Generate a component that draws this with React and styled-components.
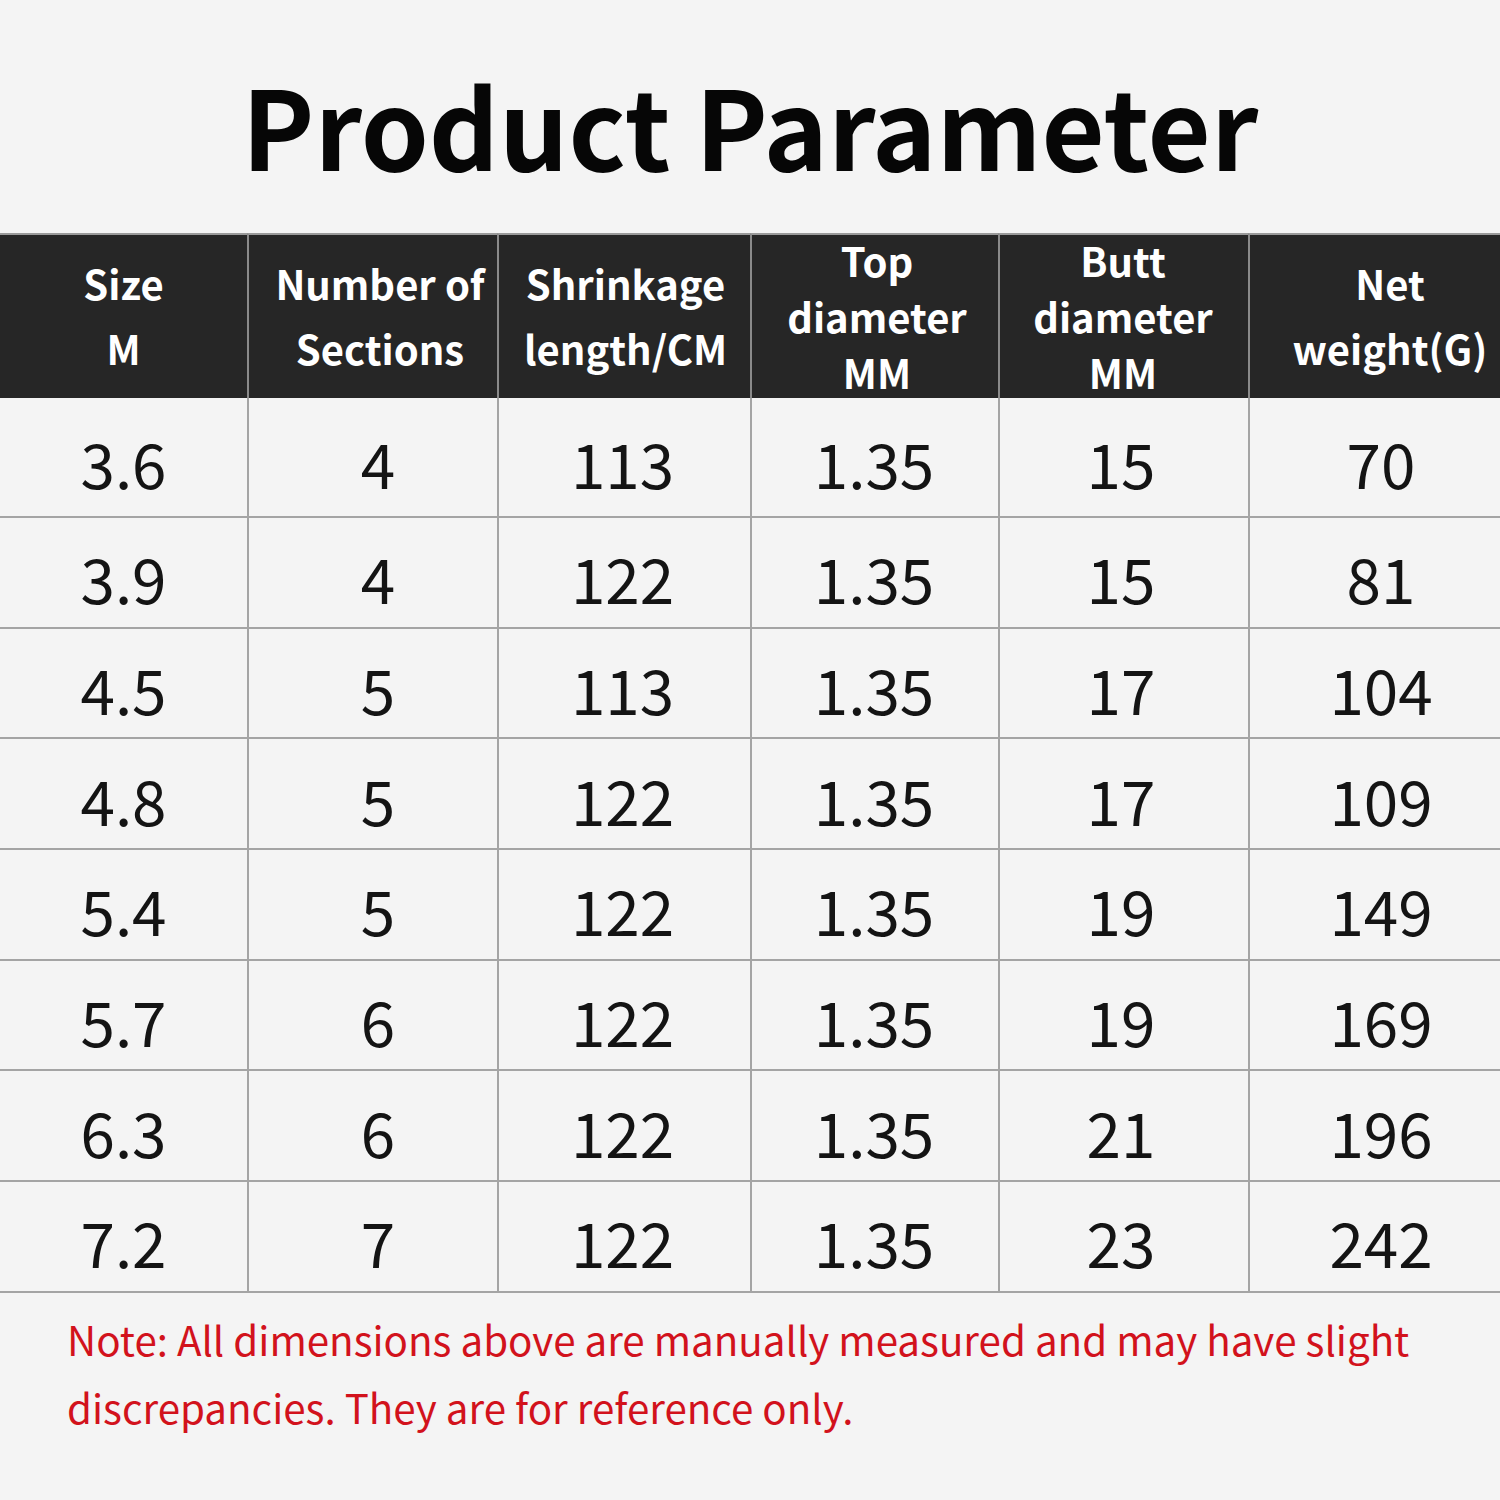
import React from "react";
import styled, { createGlobalStyle } from "styled-components";

const Global = createGlobalStyle`
  html, body { margin: 0; padding: 0; background: #f4f4f4; }
  body { font-family: "Noto Sans CJK SC", "Noto Sans", sans-serif; }
`;

const Page = styled.div`
  width: 1500px;
  height: 1500px;
  background: #f4f4f4;
  display: flex;
  flex-direction: column;
  overflow: hidden;
`;

const Title = styled.h1`
  margin: 0;
  height: 233px;
  display: flex;
  align-items: center;
  justify-content: center;
  font-size: 109px;
  font-weight: 700;
  color: #060606;
  padding-top: 14px;
  box-sizing: border-box;
`;

const Table = styled.div`
  display: grid;
  grid-template-columns: 247px 250px 253px 248px 250px 1fr;
  grid-template-rows: 165px 120px repeat(7, 110.7px);
`;

const shiftPad = (s) =>
  s >= 0 ? `padding-left: ${s * 2}px;` : `padding-right: ${-s * 2}px;`;

const HeadCell = styled.div`
  background: #262626;
  color: #fff;
  font-weight: 700;
  font-size: 40px;
  line-height: ${(p) => (p.$lines === 3 ? "56px" : "65px")};
  display: flex;
  align-items: center;
  justify-content: center;
  text-align: center;
  white-space: pre-line;
  border-top: 2px solid #9a9a9a;
  border-left: ${(p) => (p.$first ? "none" : "2px solid #8a8a8a")};
  box-sizing: border-box;
  padding-bottom: 2px;
  ${(p) => shiftPad(p.$shift || 0)}
`;

const Cell = styled.div`
  display: flex;
  align-items: center;
  justify-content: center;
  font-size: 62px;
  font-weight: 400;
  color: #141414;
  border-left: ${(p) => (p.$first ? "none" : "2px solid #a4a4a4")};
  border-bottom: 2px solid #a4a4a4;
  box-sizing: border-box;
  padding-top: 10px;
  ${(p) => shiftPad(p.$shift || 0)}
`;

const Note = styled.p`
  margin: 0;
  padding: 12px 60px 0 67px;
  color: #d2121c;
  font-size: 40.3px;
  line-height: 68px;
  font-weight: 400;
`;

const headers = [
  { t: "Size\nM", l: 2, s: 0 },
  { t: "Number of\nSections", l: 2, s: 7 },
  { t: "Shrinkage\nlength/CM", l: 2, s: 1 },
  { t: "Top\ndiameter\nMM", l: 3, s: 2 },
  { t: "Butt\ndiameter\nMM", l: 3, s: -1 },
  { t: "Net\nweight(G)", l: 2, s: 15 },
];

const cellShift = [0, 5, -2, -1, -3, 6];

const rows = [
  ["3.6", "4", "113", "1.35", "15", "70"],
  ["3.9", "4", "122", "1.35", "15", "81"],
  ["4.5", "5", "113", "1.35", "17", "104"],
  ["4.8", "5", "122", "1.35", "17", "109"],
  ["5.4", "5", "122", "1.35", "19", "149"],
  ["5.7", "6", "122", "1.35", "19", "169"],
  ["6.3", "6", "122", "1.35", "21", "196"],
  ["7.2", "7", "122", "1.35", "23", "242"],
];

export default function App() {
  return (
    <>
      <Global />
      <Page>
        <Title>Product Parameter</Title>
        <Table>
          {headers.map((h, i) => (
            <HeadCell key={i} $lines={h.l} $first={i === 0} $shift={h.s}>
              {h.t}
            </HeadCell>
          ))}
          {rows.map((r, ri) =>
            r.map((v, ci) => (
              <Cell key={ri + "-" + ci} $first={ci === 0} $shift={cellShift[ci]}>
                {v}
              </Cell>
            ))
          )}
        </Table>
        <Note>
          Note: All dimensions above are manually measured and may have slight
          discrepancies. They are for reference only.
        </Note>
      </Page>
    </>
  );
}
